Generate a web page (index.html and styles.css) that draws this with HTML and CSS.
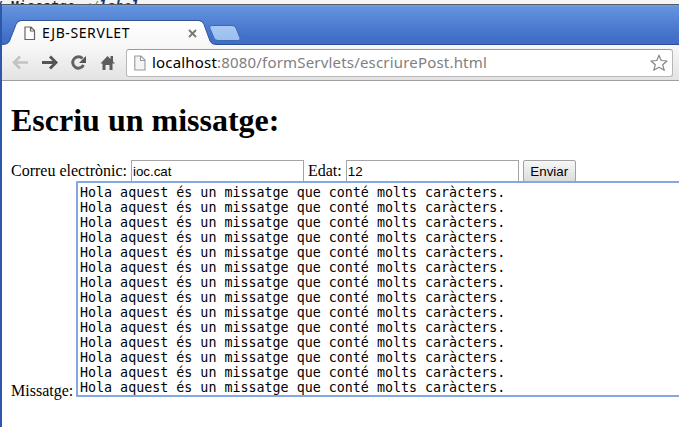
FILE: index.html
```html
<!DOCTYPE html>
<html lang="ca">
<head>
<meta charset="utf-8">
<title>EJB-SERVLET</title>
<link rel="stylesheet" href="styles.css">
</head>
<body>
<div class="editor-strip"><span class="code"><b>/</b> <span class="word">Missatge:</span><i class="bracket">&lt;/</i><i>label</i></span></div>
<div class="window">
  <header class="titlebar">
    <svg class="tab-shapes" width="260" height="41" viewBox="0 4 260 41">
      <defs>
        <linearGradient id="tab" x1="0" y1="0" x2="0" y2="1"><stop offset="0" stop-color="#fff"/><stop offset="1" stop-color="#f7f7f7"/></linearGradient>
        <linearGradient id="plus" x1="0" y1="0" x2="0" y2="1"><stop offset="0" stop-color="#a9c9f4"/><stop offset="1" stop-color="#98bff0"/></linearGradient>
      </defs>
      <path d="M2 45V44.500Q8 44.500 9.500 41L16 24.500Q17.500 21 21 21H199Q202.500 21 204 24.500L210 41Q211.500 44.500 216 44.500V45Z" fill="url(#tab)"/>
      <path d="M2 44.500Q8 44.500 9.500 41L16 24.500Q17.500 20.500 21 20.500H199Q202.500 20.500 204 24.500L210 41Q211.500 44.500 216 44.500" fill="none" stroke="#31569b"/>
      <path d="M213 25.500H232Q235 25.500 236 28L240 38Q241 40.500 238 40.500H218Q215 40.500 214 38L209.800 28Q209 25.500 213 25.500Z" fill="url(#plus)" stroke="#3e68b2"/>
    </svg>
    <div class="tab">
      <svg class="page-icon" width="12" height="15" viewBox="0 0 12 15"><path d="M1 1H7L10.500 4.500V13.500H1ZM6.500 1V5H10.500" fill="#fff" stroke="#666" stroke-width="1.200"/></svg>
      <span class="tab-title">EJB-SERVLET</span>
      <svg class="close" width="9" height="9" viewBox="0 0 9 9"><path d="M1 1L8 8M8 1L1 8" stroke="#777" stroke-width="1.800"/></svg>
    </div>
  </header>
  <nav class="toolbar">
    <svg class="nav-icons" width="124" height="35" viewBox="2 45 124 35">
      <g fill="none" stroke-width="2.500">
        <path d="M28 62.500H15M20 56.500L14 62.500L20 68.500" stroke="#c2c2c2"/>
        <path d="M42 62.500H55M50 56.500L56 62.500L50 68.500" stroke="#555" stroke-width="2.900"/>
        <path d="M82.500 58.500A5.700 5.700 0 1 0 83.500 65" stroke="#626262" stroke-width="2.900"/>
      </g>
      <path d="M86 56V63H79Z" fill="#555"/>
      <path d="M100.500 63.500L107.500 56L110.500 59V56H113V61.500L115 63.500H112.500V70H109.500V65H105.500V70H102.500V63.500Z" fill="#5c5c5c"/>
    </svg>
    <div class="address">
      <svg width="12" height="16" viewBox="0 0 12 16"><path d="M.8 1H7L11 5V15H.8ZM6.500 1V5.500H11" fill="#f5f5f5" stroke="#999" stroke-width="1.100"/></svg>
      <span class="url"><b>localhost</b>:8080/formServlets/escriurePost.html</span>
      <svg class="star" width="20" height="20" viewBox="0 0 20 20"><path d="M10 2.200L12.200 7.500L18 8L13.700 11.800L15.300 17.300L10 14.300L4.700 17.300L6.300 11.800L2 8L7.800 7.500Z" fill="#fff" stroke="#858585" stroke-width="1.200" stroke-linejoin="round"/></svg>
    </div>
  </nav>
  <main class="page">
    <h1>Escriu un missatge:</h1>
    <form>
      <div class="fields">
        <label for="mail">Correu electrònic:</label><input id="mail" value="ioc.cat">
        <label for="age">Edat:</label><input id="age" value="12">
        <button type="button">Enviar</button>
      </div>
      <div class="message">
        <label for="msg">Missatge:</label>
        <textarea id="msg" spellcheck="false">Hola aquest és un missatge que conté molts caràcters.
Hola aquest és un missatge que conté molts caràcters.
Hola aquest és un missatge que conté molts caràcters.
Hola aquest és un missatge que conté molts caràcters.
Hola aquest és un missatge que conté molts caràcters.
Hola aquest és un missatge que conté molts caràcters.
Hola aquest és un missatge que conté molts caràcters.
Hola aquest és un missatge que conté molts caràcters.
Hola aquest és un missatge que conté molts caràcters.
Hola aquest és un missatge que conté molts caràcters.
Hola aquest és un missatge que conté molts caràcters.
Hola aquest és un missatge que conté molts caràcters.
Hola aquest és un missatge que conté molts caràcters.
Hola aquest és un missatge que conté molts caràcters.</textarea>
      </div>
    </form>
  </main>
</div>
</body>
</html>
```
FILE: styles.css
```css
* { box-sizing: border-box; }
body { margin: 0; width: 679px; height: 427px; overflow: hidden; background: #fff; font: 16px/18px "Liberation Serif", serif; color: #000; }
svg { display: block; flex: none; }
.editor-strip { height: 4px; overflow: hidden; background: #f4f4f4; display: flex; align-items: flex-start; }
.code { font: 13.333px/15px "DejaVu Sans Mono", monospace; white-space: pre; color: #222; margin-top: -1px; margin-left: -5px; }
.code b, .code i { color: #15357a; font-weight: bold; }
.code .bracket { color: #3aa78c; font-weight: normal; }
.window { height: 423px; border-left: 2px solid #2c58ac; overflow: hidden; }
.titlebar { position: relative; height: 41px; margin-left: -2px; border-top: 1px solid #555a63; border-bottom: 1px solid #2c509a; background: linear-gradient(#6da0e4 0, #6393de 2px, #4270c9 32px, #406dc6 100%); }
.tab-shapes { position: absolute; left: 0; top: -1px; }
.tab { position: relative; display: flex; align-items: center; width: 198px; height: 23px; margin-left: 24px; top: 17px; }
.tab-title { font: 14px/18px "Noto Sans", sans-serif; margin: -2px 0 0 6px; width: 146px; white-space: nowrap; letter-spacing: .6px; }
.toolbar { height: 36px; display: flex; border-bottom: 1px solid #a0a0a0; background: linear-gradient(#f8f8f8, #e3e3e3); }
.address { width: 547px; height: 28px; margin-top: 4px; padding: 0 3px 0 7px; display: flex; align-items: center; background: #fff; border: 1px solid #b7b7b7; border-top-color: #999; border-radius: 3px; }
.url { flex: 1; margin: -2px 0 0 6px; font: 15px/22px "Noto Sans", sans-serif; letter-spacing: .185px; color: #808080; white-space: nowrap; }
.url b { font-weight: normal; color: #000; }
.page { padding: 21px 0 0 9px; }
h1 { margin: 0 0 22px; font-size: 32px; line-height: 37px; }
.fields { display: flex; height: 20px; align-items: center; }
.fields label { white-space: nowrap; }
input { width: 173px; height: 22px; margin: 0 4px; padding: 2px 1px; border: 1px solid #a5a5a5; border-radius: 0; font: 13.333px/16px "Liberation Sans", sans-serif; color: #000; background: #fff; }
button { width: 53px; height: 22px; padding: 2px 0 0; border: 1px solid #a2a2a2; border-radius: 2px; background: linear-gradient(#f7f7f7, #dcdcdc); font: 13.333px/18px "Liberation Sans", sans-serif; color: #000; }
.message { display: flex; align-items: flex-end; position: relative; }
.message label { width: 65px; margin-bottom: -3px; flex: none; }
textarea { width: 640px; height: 216px; flex: none; display: block; margin: 0; padding: 2px; border: 2px solid #86a8e2; border-radius: 1px; outline: none; resize: none; overflow: hidden; font: 13.333px/15px "DejaVu Sans Mono", monospace; color: #000; background: #fff; }
```
